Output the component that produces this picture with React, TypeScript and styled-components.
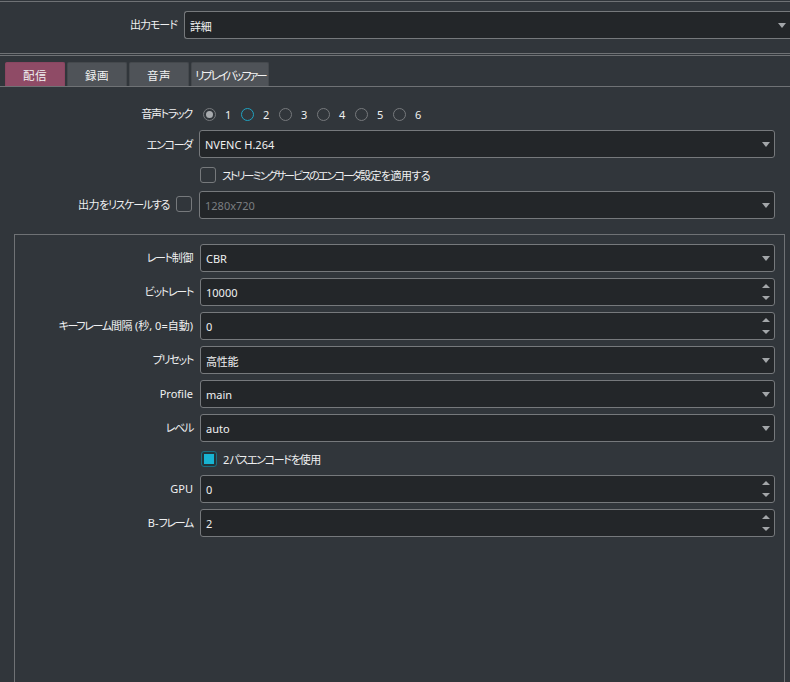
import { Fragment } from 'react'
import styled, { createGlobalStyle } from 'styled-components'

const GlobalStyle = createGlobalStyle`
  html, body {
    margin: 0;
    background: #31363b;
  }
  body {
    font-family: "Noto Sans", "Noto Sans CJK JP", sans-serif;
    font-size: 11px;
    color: #eff0f1;
    font-feature-settings: "palt";
    overflow: hidden;
  }
`

const Page = styled.div`
  height: 682px;
  display: flex;
  flex-direction: column;
  overflow: hidden;
`

const Header = styled.div`
  margin-top: 1px;
  border-top: 1px solid #6f7275;
  padding: 9px 0 14px;
  border-bottom: 1px solid #6f7275;
`

const Separator = styled.div`
  height: 1px;
  margin-top: 1px;
  background: #6f7275;
`

// Japanese text in the reference is rendered much narrower than Noto CJK
const Jp = styled.span<{ $ls?: number }>`
  letter-spacing: ${p => p.$ls ?? -1.3}px;
`

const FormGrid = styled.div<{ $label: number }>`
  display: grid;
  grid-template-columns: ${p => p.$label}px 1fr;
  column-gap: 7px;
  row-gap: 6px;
  align-items: center;
`

const Label = styled.div`
  text-align: right;
  white-space: nowrap;
  display: flex;
  justify-content: flex-end;
  align-items: center;
  gap: 7px;
  height: 100%;
  padding-bottom: 2px;
  box-sizing: border-box;
`

const Field = styled.div<{ $disabled?: boolean; $open?: boolean }>`
  position: relative;
  height: 28px;
  box-sizing: border-box;
  border: 1px solid #76797c;
  border-radius: ${p => (p.$open ? '3px 0 0 3px' : '3px')};
  ${p => p.$open && 'border-right: none;'}
  background: #232629;
  color: ${p => (p.$disabled ? '#7b7e81' : '#eff0f1')};
  display: flex;
  align-items: center;
  padding: 1px 0 0 5px;
`

const DropArrow = styled.span`
  position: absolute;
  right: 4px;
  top: 11px;
  border-left: 4px solid transparent;
  border-right: 4px solid transparent;
  border-top: 5px solid #a3a6a9;
`

const SpinUp = styled.span`
  position: absolute;
  right: 4px;
  top: 5px;
  border-left: 4px solid transparent;
  border-right: 4px solid transparent;
  border-bottom: 4px solid #a3a6a9;
`

const SpinDown = styled.span`
  position: absolute;
  right: 4px;
  bottom: 5px;
  border-left: 4px solid transparent;
  border-right: 4px solid transparent;
  border-top: 4px solid #a3a6a9;
`

const TabBar = styled.div`
  display: flex;
  gap: 2px;
  padding: 6px 0 0 5px;
  border-bottom: 1px solid #6f7275;
`

const Tab = styled.div<{ $active?: boolean }>`
  height: 24px;
  min-width: 60px;
  box-sizing: border-box;
  padding: 1px 3px 0;
  display: flex;
  align-items: center;
  justify-content: center;
  border: 1px solid ${p => (p.$active ? '#8a4661' : '#45494d')};
  border-bottom: none;
  border-radius: 2px 2px 0 0;
  background: ${p => (p.$active ? '#8f4b66' : '#4f5358')};
  color: #f2f2f2;
  font-size: 11.5px;
`

const Content = styled.div`
  flex: 1;
  display: flex;
  flex-direction: column;
  padding: 17px 0 0;
`

const TopForm = styled.div`
  padding-right: 15px;
`

const Radios = styled.div`
  display: flex;
  align-items: center;
  height: 20px;
  padding-left: 4px;
`

const RadioItem = styled.div`
  display: flex;
  align-items: center;
  width: 38px;
  gap: 9px;
`

const Radio = styled.span<{ $state?: 'checked' | 'hover' }>`
  width: 13px;
  height: 13px;
  box-sizing: border-box;
  border-radius: 50%;
  border: 1.5px solid ${p => (p.$state === 'hover' ? '#1fa3c2' : '#76797c')};
  display: flex;
  align-items: center;
  justify-content: center;
  &::after {
    content: '';
    width: 7px;
    height: 7px;
    border-radius: 50%;
    background: ${p => (p.$state === 'checked' ? '#a8abae' : 'transparent')};
  }
`

const CheckRow = styled.div`
  display: flex;
  align-items: center;
  gap: 6px;
  height: 21px;
  padding-left: 1px;
`

const CheckBox = styled.span<{ $checked?: boolean }>`
  width: 16px;
  height: 16px;
  box-sizing: border-box;
  border-radius: 3px;
  border: 1px solid ${p => (p.$checked ? '#1a6f82' : '#76797c')};
  background: ${p => (p.$checked ? '#23353b' : 'transparent')};
  display: flex;
  align-items: center;
  justify-content: center;
  &::after {
    content: '';
    width: 10px;
    height: 10px;
    background: ${p => (p.$checked ? '#18b4d2' : 'transparent')};
  }
`

const GroupBox = styled.div`
  flex: 1;
  margin: 15px 5px -10px 14px;
  border: 1px solid #6f7275;
  padding: 9px 9px 0 0;
`

type Kind = 'combo' | 'spin'

const Input = ({ value, kind = 'combo', disabled, open }: { value: React.ReactNode; kind?: Kind; disabled?: boolean; open?: boolean }) => (
  <Field $disabled={disabled} $open={open}>
    {value}
    {kind === 'combo' ? <DropArrow /> : (<><SpinUp /><SpinDown /></>)}
  </Field>
)

type Row = { key: string; label: React.ReactNode; value: React.ReactNode; kind: Kind }

const encoderRows: Row[] = [
  { key: 'rc', label: <><Jp>レート</Jp><Jp $ls={-0.4}>制御</Jp></>, value: 'CBR', kind: 'combo' },
  { key: 'br', label: <Jp>ビットレート</Jp>, value: '10000', kind: 'spin' },
  { key: 'kf', label: <><Jp>キーフレーム</Jp><Jp $ls={-0.4}>間隔</Jp> (<Jp $ls={0}>秒</Jp>, 0=<Jp $ls={0}>自動</Jp>)</>, value: '0', kind: 'spin' },
  { key: 'ps', label: <Jp>プリセット</Jp>, value: <Jp $ls={-0.3}>高性能</Jp>, kind: 'combo' },
  { key: 'pf', label: 'Profile', value: 'main', kind: 'combo' },
  { key: 'lv', label: <Jp>レベル</Jp>, value: 'auto', kind: 'combo' },
]

const tailRows: Row[] = [
  { key: 'gpu', label: 'GPU', value: '0', kind: 'spin' },
  { key: 'bf', label: <>B-<Jp>フレーム</Jp></>, value: '2', kind: 'spin' },
]

const renderRows = (rows: Row[]) =>
  rows.map(r => (
    <Fragment key={r.key}>
      <Label><span>{r.label}</span></Label>
      <Input value={r.value} kind={r.kind} />
    </Fragment>
  ))

export default function App() {
  return (
    <Page>
      <GlobalStyle />
      <Header>
        <FormGrid $label={177}>
          <Label><Jp $ls={-1}>出力モード</Jp></Label>
          <Input value={<Jp $ls={-0.3}>詳細</Jp>} open />
        </FormGrid>
      </Header>
      <Separator />
      <TabBar>
        <Tab $active><Jp $ls={0.5}>配信</Jp></Tab>
        <Tab><Jp $ls={0.5}>録画</Jp></Tab>
        <Tab><Jp $ls={0.5}>音声</Jp></Tab>
        <Tab><Jp $ls={-2.2}>リプレイバッファー</Jp></Tab>
      </TabBar>
      <Content>
        <TopForm>
          <FormGrid $label={192}>
            <Label><Jp>音声トラック</Jp></Label>
            <Radios>
              {[1, 2, 3, 4, 5, 6].map(n => (
                <RadioItem key={n}>
                  <Radio $state={n === 1 ? 'checked' : n === 2 ? 'hover' : undefined} />
                  {n}
                </RadioItem>
              ))}
            </Radios>
            <Label style={{ marginTop: 2 }}><Jp>エンコーダ</Jp></Label>
            <Input value="NVENC H.264" />
            <div />
            <CheckRow>
              <CheckBox />
              <span>
                <Jp $ls={-1.9}>ストリーミングサービスのエンコーダ</Jp>
                <Jp $ls={-0.6}>設定を適用する</Jp>
              </span>
            </CheckRow>
            <Label>
              <span><Jp $ls={-0.5}>出力</Jp><Jp>をリスケールする</Jp></span>
              <CheckBox />
            </Label>
            <Input value="1280x720" disabled />
          </FormGrid>
        </TopForm>
        <GroupBox>
          <FormGrid $label={178}>
            {renderRows(encoderRows)}
            <div />
            <CheckRow>
              <CheckBox $checked />
              <span>2<Jp>パスエンコードを</Jp><Jp $ls={-0.5}>使用</Jp></span>
            </CheckRow>
            {renderRows(tailRows)}
          </FormGrid>
        </GroupBox>
      </Content>
    </Page>
  )
}
